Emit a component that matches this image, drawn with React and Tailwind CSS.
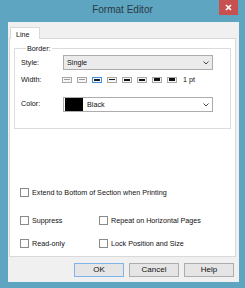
const WIDTHS = [
  { h: "h-px", c: "bg-[#9a9a9a]" },
  { h: "h-px", c: "bg-[#9a9a9a]" },
  { h: "h-[2px]", c: "bg-[#1a1a1a]", sel: true },
  { h: "h-px", c: "bg-[#1a1a1a]" },
  { h: "h-[2px]", c: "bg-[#111]" },
  { h: "h-[2px]", c: "bg-[#111]" },
  { h: "h-[3px]", c: "bg-[#111]" },
  { h: "h-[3px]", c: "bg-[#111]" },
];

function Chevron() {
  return (
    <svg width="6" height="4" viewBox="0 0 6 4" className="shrink-0">
      <path d="M0.5 0.5 L3 3 L5.5 0.5" fill="none" stroke="#444" strokeWidth="1" />
    </svg>
  );
}

function CheckBox({ label, className = "" }) {
  return (
    <div className={"flex items-center gap-[3px] " + className}>
      <div className="w-[9px] h-[9px] border border-[#8a8a8a] bg-white shrink-0" />
      <span>{label}</span>
    </div>
  );
}

function Button({ children, primary }) {
  return (
    <div
      className={
        "w-[50px] h-[14px] flex items-center justify-center bg-[#e5e5e5] border " +
        (primary ? "border-[#7eb4ea]" : "border-[#adadad]")
      }
    >
      {children}
    </div>
  );
}

export default function App() {
  return (
    <div className="w-[245px] h-[288px] bg-[#5ea5c1] flex flex-col overflow-hidden text-[7.2px] leading-none text-[#111] font-['Liberation_Sans',Arial,sans-serif]">
      {/* title bar */}
      <div className="h-[22px] relative shrink-0">
        <div className="text-center text-[10px] text-[#2a3a42] pt-[5px]">Format Editor</div>
        <div className="absolute right-[7px] top-0 w-[19px] h-[15px] bg-[#c75050] flex items-center justify-center">
          <svg width="7" height="7" viewBox="0 0 7 7">
            <path d="M1 1 L6 6 M6 1 L1 6" stroke="#fff" strokeWidth="1.6" />
          </svg>
        </div>
      </div>

      {/* client */}
      <div className="ml-[8px] mr-[6px] mb-[6px] flex-1 bg-[#f0f0f0] flex flex-col">
        <div className="pt-[5px] pl-[2px] flex">
          <div className="w-[30px] h-[12px] bg-white border border-[#d9d9d9] border-b-0 pl-[5px] pt-[3px] -mb-px relative z-10">
            Line
          </div>
        </div>

        <div className="ml-[1px] w-[227px] h-[219px] bg-white border border-[#d9d9d9] flex flex-col">
          <fieldset className="ml-[4px] mt-[6px] w-[217px] h-[84px] border border-[#dcdcdc] pl-[6px] pr-[16px]">
            <legend className="ml-[5px] px-[1px]">Border:</legend>

            <div className="flex items-center mt-[3px]">
              <span className="w-[42px]">Style:</span>
              <div className="w-[150px] h-[15px] border border-[#acacac] bg-[#ebebeb] flex items-center justify-between pl-[3px] pr-[3px]">
                <span>Single</span>
                <Chevron />
              </div>
            </div>

            <div className="flex items-center mt-[6px]">
              <span className="w-[41px]">Width:</span>
              <div className="flex items-center gap-[5px]">
                {WIDTHS.map((w, i) => (
                  <div
                    key={i}
                    className={
                      "w-[10px] h-[6px] border bg-[#f6f6f6] flex items-center px-px " +
                      (w.sel ? "border-[#3d8ee0]" : "border-[#a8a8a8]")
                    }
                  >
                    <div className={"w-full " + w.h + " " + w.c} />
                  </div>
                ))}
              </div>
              <span className="ml-[6px]">1 pt</span>
            </div>

            <div className="flex items-start mt-[14px]">
              <span className="w-[42px] pt-[3px]">Color:</span>
              <div className="w-[150px] h-[15px] border border-[#acacac] bg-white flex items-center pr-[3px]">
                <div className="w-[18px] h-[13px] bg-black ml-px" />
                <span className="ml-[4px] flex-1">Black</span>
                <Chevron />
              </div>
            </div>
          </fieldset>

          <div className="pl-[10px] flex flex-col">
            <CheckBox label="Extend to Bottom of Section when Printing" className="mt-[59px]" />
            <div className="flex mt-[19px]">
              <CheckBox label="Suppress" className="w-[79px]" />
              <CheckBox label="Repeat on Horizontal Pages" />
            </div>
            <div className="flex mt-[14px]">
              <CheckBox label="Read-only" className="w-[79px]" />
              <CheckBox label="Lock Position and Size" />
            </div>
          </div>
        </div>

        <div className="flex gap-[5px] pl-[66px] mt-[6px] text-[8px]">
          <Button primary>OK</Button>
          <Button>Cancel</Button>
          <Button>Help</Button>
        </div>
      </div>
    </div>
  );
}
